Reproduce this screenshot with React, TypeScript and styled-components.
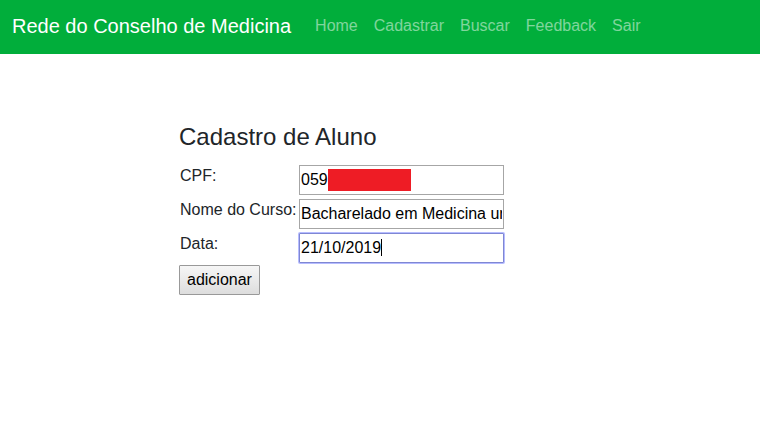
import React, { useState } from "react";
import styled, { createGlobalStyle, css } from "styled-components";

const GlobalStyle = createGlobalStyle`
  *, *::before, *::after { box-sizing: border-box; }
  body {
    margin: 0;
    background: #fff;
    color: #212529;
    font-family: "Liberation Sans", Arial, sans-serif;
    font-size: 16px;
    line-height: 24px;
  }
`;

const Navbar = styled.nav`
  display: flex;
  align-items: center;
  gap: 16px;
  padding: 6px 12px 8px;
  background: #01ae3b;
`;

const Brand = styled.a`
  color: #fff;
  font-size: 20px;
  line-height: 30px;
  text-decoration: none;
  white-space: nowrap;
`;

const NavList = styled.ul`
  display: flex;
  margin: 0;
  padding: 0;
  list-style: none;
`;

const NavLink = styled.a`
  display: block;
  padding: 8px;
  color: rgba(255, 255, 255, 0.5);
  text-decoration: none;
`;

const Content = styled.main`
  padding: 68px 16px 16px 179px;
`;

const Title = styled.h1`
  margin: 0 0 12px;
  font-size: 24px;
  font-weight: 400;
  line-height: 30px;
`;

const Fields = styled.div`
  display: grid;
  grid-template-columns: 117px max-content;
  column-gap: 2px;
  row-gap: 4px;
  padding: 1px 0 0 1px;
`;

const Label = styled.label`
  line-height: 22px;
  white-space: nowrap;
`;

const FieldBox = styled.div`
  position: relative;
  width: 205px;
`;

const Input = styled.input<{ $active?: boolean }>`
  display: block;
  width: 100%;
  height: 30px;
  padding: 1px;
  border: 1px solid #a6a6a6;
  border-radius: 0;
  outline: none;
  background: #fff;
  color: #000;
  font: inherit;
  ${({ $active }) =>
    $active &&
    css`
      border-color: #7f87d3;
      border-radius: 1px;
      box-shadow: 0 0 0 1px #b6bcff;
    `}
`;

const Redaction = styled.span`
  position: absolute;
  top: 4px;
  left: 29px;
  width: 83px;
  height: 22px;
  background: #ee1c25;
`;

const Caret = styled.span`
  position: absolute;
  top: 6px;
  left: 82px;
  width: 1px;
  height: 17px;
  background: #000;
`;

const Submit = styled.button`
  display: block;
  height: 30px;
  margin-top: 2px;
  padding: 1px 7px;
  border: 1px solid #999;
  border-radius: 1px;
  background: linear-gradient(#f6f6f6, #dddddd);
  color: #000;
  font: inherit;
`;

const links = ["Home", "Cadastrar", "Buscar", "Feedback", "Sair"];

export default function App() {
  const [values, setValues] = useState({
    cpf: "059",
    curso: "Bacharelado em Medicina urbana",
    data: "21/10/2019",
  });
  const update = (event: React.ChangeEvent<HTMLInputElement>) =>
    setValues({ ...values, [event.target.name]: event.target.value });

  return (
    <>
      <GlobalStyle />
      <Navbar>
        <Brand href="#">Rede do Conselho de Medicina</Brand>
        <NavList>
          {links.map((link) => (
            <li key={link}>
              <NavLink href="#">{link}</NavLink>
            </li>
          ))}
        </NavList>
      </Navbar>
      <Content>
        <Title>Cadastro de Aluno</Title>
        <form onSubmit={(event) => event.preventDefault()}>
          <Fields>
            <Label htmlFor="cpf">CPF:</Label>
            <FieldBox>
              <Input id="cpf" name="cpf" value={values.cpf} onChange={update} />
              <Redaction />
            </FieldBox>
            <Label htmlFor="curso">Nome do Curso:</Label>
            <FieldBox>
              <Input id="curso" name="curso" value={values.curso} onChange={update} />
            </FieldBox>
            <Label htmlFor="data">Data:</Label>
            <FieldBox>
              <Input id="data" name="data" value={values.data} onChange={update} $active />
              <Caret />
            </FieldBox>
          </Fields>
          <Submit type="submit">adicionar</Submit>
        </form>
      </Content>
    </>
  );
}
